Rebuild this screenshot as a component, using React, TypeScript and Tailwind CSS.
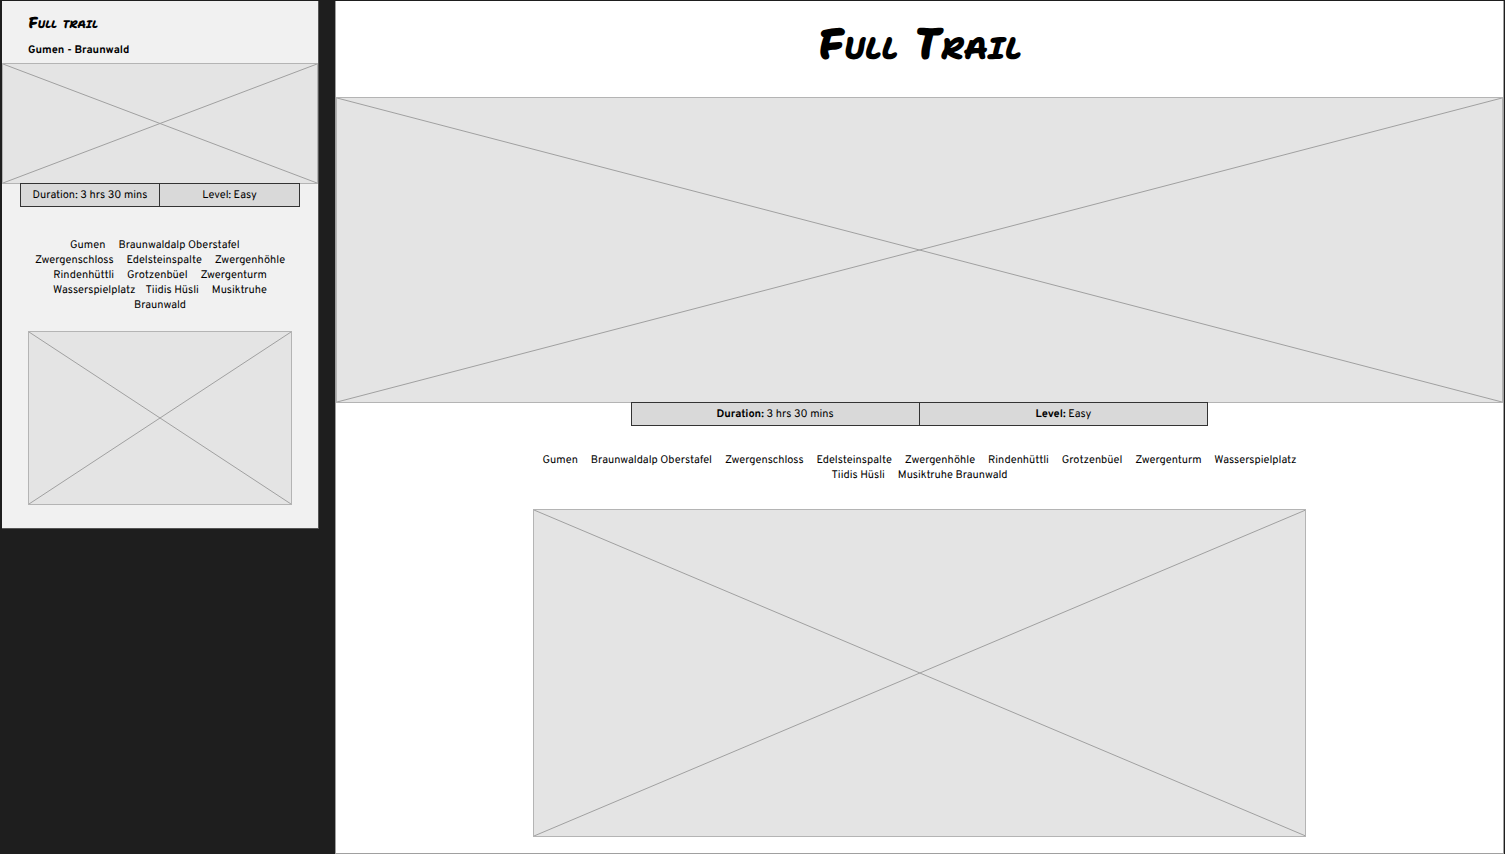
const GAP = "\u00a0\u00a0\u00a0\u00a0 ";

const join = (stops: string[]) => stops.join(GAP);

const mobileRoute = [
  join(["Gumen", "Braunwaldalp Oberstafel"]) + "\u00a0\u00a0\u00a0\u00a0",
  join(["Zwergenschloss", "Edelsteinspalte", "Zwergenhöhle"]),
  join(["Rindenhüttli", "Grotzenbüel", "Zwergenturm"]),
  "Wasserspielplatz\u00a0\u00a0\u00a0 " + join(["Tiidis Hüsli", "Musiktruhe"]),
  "Braunwald",
];

const desktopRoute = [
  join([
    "Gumen",
    "Braunwaldalp Oberstafel",
    "Zwergenschloss",
    "Edelsteinspalte",
    "Zwergenhöhle",
    "Rindenhüttli",
    "Grotzenbüel",
    "Zwergenturm",
    "Wasserspielplatz",
  ]),
  join(["Tiidis Hüsli", "Musiktruhe Braunwald"]),
];

function Placeholder({ className, label }: { className: string; label: string }) {
  return (
    <div className={`border border-[#b4b4b4] bg-[#e4e4e4] ${className}`}>
      <svg
        role="img"
        aria-label={label}
        className="block h-full w-full"
        viewBox="0 0 100 100"
        preserveAspectRatio="none"
        stroke="#a0a0a0"
      >
        <line x1="0" y1="0" x2="100" y2="100" vectorEffect="non-scaling-stroke" />
        <line x1="100" y1="0" x2="0" y2="100" vectorEffect="non-scaling-stroke" />
      </svg>
    </div>
  );
}

function Facts({ className, termClass }: { className: string; termClass: string }) {
  return (
    <dl
      className={`-mt-px grid grid-cols-2 divide-x divide-[#333333] border border-[#333333] bg-[#d9d9d9] text-center leading-5 ${className}`}
    >
      <div className="pt-0.5">
        <dt className={`inline ${termClass}`}>Duration:</dt> <dd className="inline">3 hrs 30 mins</dd>
      </div>
      <div className="pt-0.5">
        <dt className={`inline ${termClass}`}>Level:</dt> <dd className="inline">Easy</dd>
      </div>
    </dl>
  );
}

function Route({ lines, className }: { lines: string[]; className: string }) {
  return (
    <div className={`text-center leading-[15px] ${className}`}>
      {lines.map((line) => (
        <p key={line}>{line}</p>
      ))}
    </div>
  );
}

export default function App() {
  return (
    <main className="grid min-h-screen grid-cols-[317fr_1169fr] items-start gap-x-4 bg-[#1e1e1e] py-px pr-px pl-0.5 font-['Overpass','Roboto',sans-serif] text-[11px] text-black [text-rendering:geometricPrecision]">
      <section className="border-r border-b border-[#555555] bg-[#f1f1f1] pb-[23px]">
        <header className="px-[26px] pt-3">
          <h2 className="font-['Permanent_Marker','Shantell_Sans','Inter',sans-serif] text-base leading-[22px] font-extrabold italic [font-variant-caps:small-caps]">
            Full trail
          </h2>
          <p className="pt-[7px] pb-[3px] leading-[18px] font-bold">Gumen - Braunwald</p>
        </header>
        <Placeholder className="h-[121px]" label="Trail photo" />
        <Facts className="mx-[18px]" termClass="font-normal" />
        <Route className="pt-8" lines={mobileRoute} />
        <Placeholder className="mx-[26px] mt-[17px] h-[174px]" label="Trail map" />
      </section>

      <section className="border-x border-b border-[#a0a0a0] bg-white pb-4">
        <h1 className="pt-3 pb-5 text-center font-['Permanent_Marker','Shantell_Sans','Inter',sans-serif] text-[44px] leading-16 font-extrabold italic [font-variant-caps:small-caps]">
          Full Trail
        </h1>
        <Placeholder className="h-[306px]" label="Trail photo" />
        <Facts className="mx-auto w-[49.5%]" termClass="font-bold" />
        <Route className="pt-7" lines={desktopRoute} />
        <Placeholder className="mx-auto mt-[25px] h-[328px] w-[66.3%]" label="Trail map" />
      </section>
    </main>
  );
}
